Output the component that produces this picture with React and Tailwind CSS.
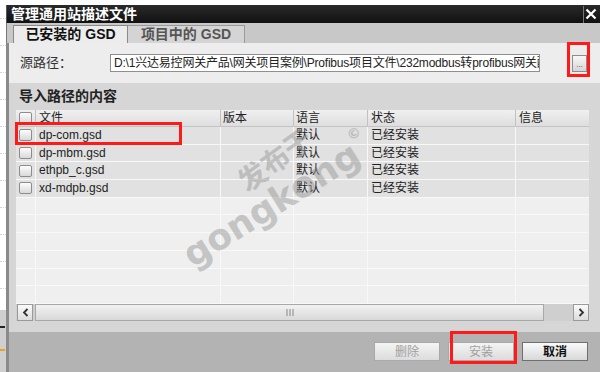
import React from 'react';

const font = { fontFamily: '"Liberation Sans", "Noto Sans CJK SC", sans-serif' };

const files = ['dp-com.gsd', 'dp-mbm.gsd', 'ethpb_c.gsd', 'xd-mdpb.gsd'];

function Check() {
  return (
    <div className="h-[12px] w-[13px] rounded-[2px] border border-[#8c8c8c] bg-gradient-to-b from-[#fdfdfd] to-[#d9d9d9]" />
  );
}

function Row({ name, filled }) {
  const bg = filled ? 'bg-[#e1e1e1]' : 'bg-[#efefef]';
  return (
    <div className={`flex h-[17.7px] border-b border-[#f8f8f8] text-[12px] leading-[17px] text-[#222] ${bg}`}>
      <div className="flex w-[20px] items-center justify-center border-r border-[#f8f8f8]">
        {filled && <Check />}
      </div>
      <div className="w-[185px] border-r border-[#f8f8f8] pl-[3px]">{name}</div>
      <div className="w-[73px] border-r border-[#f8f8f8]" />
      <div className="w-[74px] border-r border-[#f8f8f8] pl-[2px]">{filled ? '默认' : ''}</div>
      <div className="w-[148px] border-r border-[#f8f8f8] pl-[3px]">{filled ? '已经安装' : ''}</div>
      <div className="flex-1" />
    </div>
  );
}

function Button({ label, disabled }) {
  return (
    <div
      className={`flex h-[19px] w-[66px] items-center justify-center border text-[12px] ${
        disabled
          ? 'border-[#a9a9a9] bg-gradient-to-b from-[#f4f4f4] to-[#dcdcdc] text-[#a0a0a0]'
          : 'border-[#6f6f6f] bg-gradient-to-b from-[#fafafa] to-[#d8d8d8] font-bold text-[#111]'
      }`}
    >
      {label}
    </div>
  );
}

export default function App() {
  return (
    <div className="relative flex h-[372px] w-[600px] overflow-hidden bg-white" style={font}>
      {/* background app strip */}
      <div className="flex w-[6px] flex-col">
        <div className="flex flex-1 flex-col gap-[26px] pt-[18px]">
          {Array.from({ length: 11 }).map((_, i) => (
            <div key={i} className="h-0 border-t border-dotted border-[#d4d4d4]" />
          ))}
        </div>
        <div className="flex h-[62px] flex-col bg-[#cfcfcf] pt-[16px]">
          <div className="h-[2px] w-[5px] bg-[#222]" />
          <div className="mt-[21px] h-[2px] w-[5px] bg-[#f0a020]" />
        </div>
      </div>

      {/* dialog */}
      <div className="flex flex-1 flex-col">
        <div className="h-[5px] bg-white" />
        <div className="flex h-[18px] items-center justify-between border-l border-[#555] bg-gradient-to-b from-[#2a2a2a] to-[#111] pl-[4px]">
          <span className="text-[14px] font-bold leading-none text-white">管理通用站描述文件</span>
          <div className="mr-[2px] flex h-[17px] w-[15px] items-center justify-center border-l border-[#777]">
            <svg width="12" height="12" viewBox="0 0 12 12">
              <path d="M1.5 1.5 L10.5 10.5 M10.5 1.5 L1.5 10.5" stroke="white" strokeWidth="2.2" />
            </svg>
          </div>
        </div>

        <div className="flex h-[20px] items-end border-l border-[#777] bg-[#c8c8c8] pl-[6px]">
          <div className="flex h-[18px] w-[115px] items-center justify-center border border-b-0 border-[#8a8a8a] bg-[#ececec] text-[14px] font-bold text-[#111]">
            已安装的 GSD
          </div>
          <div className="flex h-[18px] w-[117px] items-center justify-center border border-b-0 border-l-0 border-[#9a9a9a] bg-[#d4d4d4] text-[14px] font-bold text-[#555]">
            项目中的 GSD
          </div>
        </div>

        <div className="flex h-[40px] items-center border-l-[3px] border-[#8a8a8a] bg-[#ededed] pl-[11px]">
          <span className="w-[90px] text-[13px] text-[#333]">源路径：</span>
          <div className="h-[18px] w-[430px] overflow-hidden whitespace-nowrap border border-[#8f8f8f] bg-white pl-[3px] text-[12px] leading-[16px] tracking-[-0.2px] text-[#222]">
            D:\1兴达易控网关产品\网关项目案例\Profibus项目文件\232modbus转profibus网关配置
          </div>
          <div className="ml-[32px] flex h-[17px] w-[15px] items-end justify-center border border-[#8d8d8d] bg-gradient-to-b from-[#f8f8f8] to-[#d6d6d6] pb-[2px] text-[8px] leading-none text-[#444]">
            ...
          </div>
        </div>

        <div className="flex h-[249px] flex-col border-l-[3px] border-[#8a8a8a] bg-[#d6d6d6] pl-[7px] pr-[11px]">
          <div className="flex h-[27px] items-center pl-[3px] text-[14px] font-bold text-[#222]">导入路径的内容</div>
          <div className="flex flex-col">
            <div className="flex h-[17px] border-b border-[#c4c4c4] bg-gradient-to-b from-[#f0f0f0] to-[#dedede] text-[12px] leading-[16px] text-[#222]">
              <div className="flex w-[20px] items-center justify-center border-r border-[#c2c2c2]">
                <Check />
              </div>
              <div className="w-[185px] border-r border-[#c2c2c2] pl-[3px]">文件</div>
              <div className="w-[73px] border-r border-[#c2c2c2] pl-[2px]">版本</div>
              <div className="w-[74px] border-r border-[#c2c2c2] pl-[2px]">语言</div>
              <div className="w-[148px] border-r border-[#c2c2c2] pl-[3px]">状态</div>
              <div className="flex-1 pl-[3px]">信息</div>
            </div>
            {Array.from({ length: 10 }).map((_, i) => (
              <Row key={i} name={files[i] || ''} filled={i < files.length} />
            ))}
          </div>
          <div className="flex h-[17px] items-stretch bg-[#cfcfcf]">
            <div className="ml-[1px] flex w-[16px] items-center justify-center border border-[#9a9a9a] bg-gradient-to-b from-[#fafafa] to-[#dcdcdc]">
              <svg width="7" height="9" viewBox="0 0 7 9">
                <path d="M5.5 1 L2 4.5 L5.5 8" stroke="#333" strokeWidth="1.8" fill="none" />
              </svg>
            </div>
            <div className="ml-[2px] flex w-[509px] items-center justify-center border border-[#a8a8a8] bg-gradient-to-b from-[#f2f2f2] to-[#d9d9d9]">
              <svg width="8" height="9" viewBox="0 0 8 9">
                <path d="M1 1 V8 M4 1 V8 M7 1 V8" stroke="#888" strokeWidth="1" />
              </svg>
            </div>
            <div className="flex-1" />
            <div className="flex w-[16px] items-center justify-center border border-[#9a9a9a] bg-gradient-to-b from-[#fafafa] to-[#dcdcdc]">
              <svg width="7" height="9" viewBox="0 0 7 9">
                <path d="M1.5 1 L5 4.5 L1.5 8" stroke="#333" strokeWidth="1.8" fill="none" />
              </svg>
            </div>
          </div>
        </div>

        <div className="flex h-[40px] items-start justify-end gap-[8px] border-l-[3px] border-[#8a8a8a] bg-[#b3b3b3] pr-[12px] pt-[10px]">
          <Button label="删除" disabled />
          <Button label="安装" disabled />
          <Button label="取消" />
        </div>
      </div>

      {/* annotation boxes */}
      <div className="absolute left-[567px] top-[42px] h-[35px] w-[23px] border-[3px] border-[#ff1a1a]" />
      <div className="absolute left-[15px] top-[122px] h-[23px] w-[167px] border-[3px] border-[#ff1a1a]" />
      <div className="absolute left-[450px] top-[331px] h-[33px] w-[67px] border-[3px] border-[#ff1a1a]" />

      {/* watermark */}
      <div className="pointer-events-none absolute left-[234px] top-[140px] -rotate-[36deg] text-[28px] font-bold text-[#9a9a9a] opacity-50">
        发布于
      </div>
      <div className="pointer-events-none absolute left-[170px] top-[174px] -rotate-[32deg] text-[36px] font-bold text-[#9a9a9a] opacity-50" style={{ fontFamily: '"DejaVu Sans", sans-serif' }}>
        gongkong<span className="align-top text-[14px]">©</span>
      </div>
    </div>
  );
}
